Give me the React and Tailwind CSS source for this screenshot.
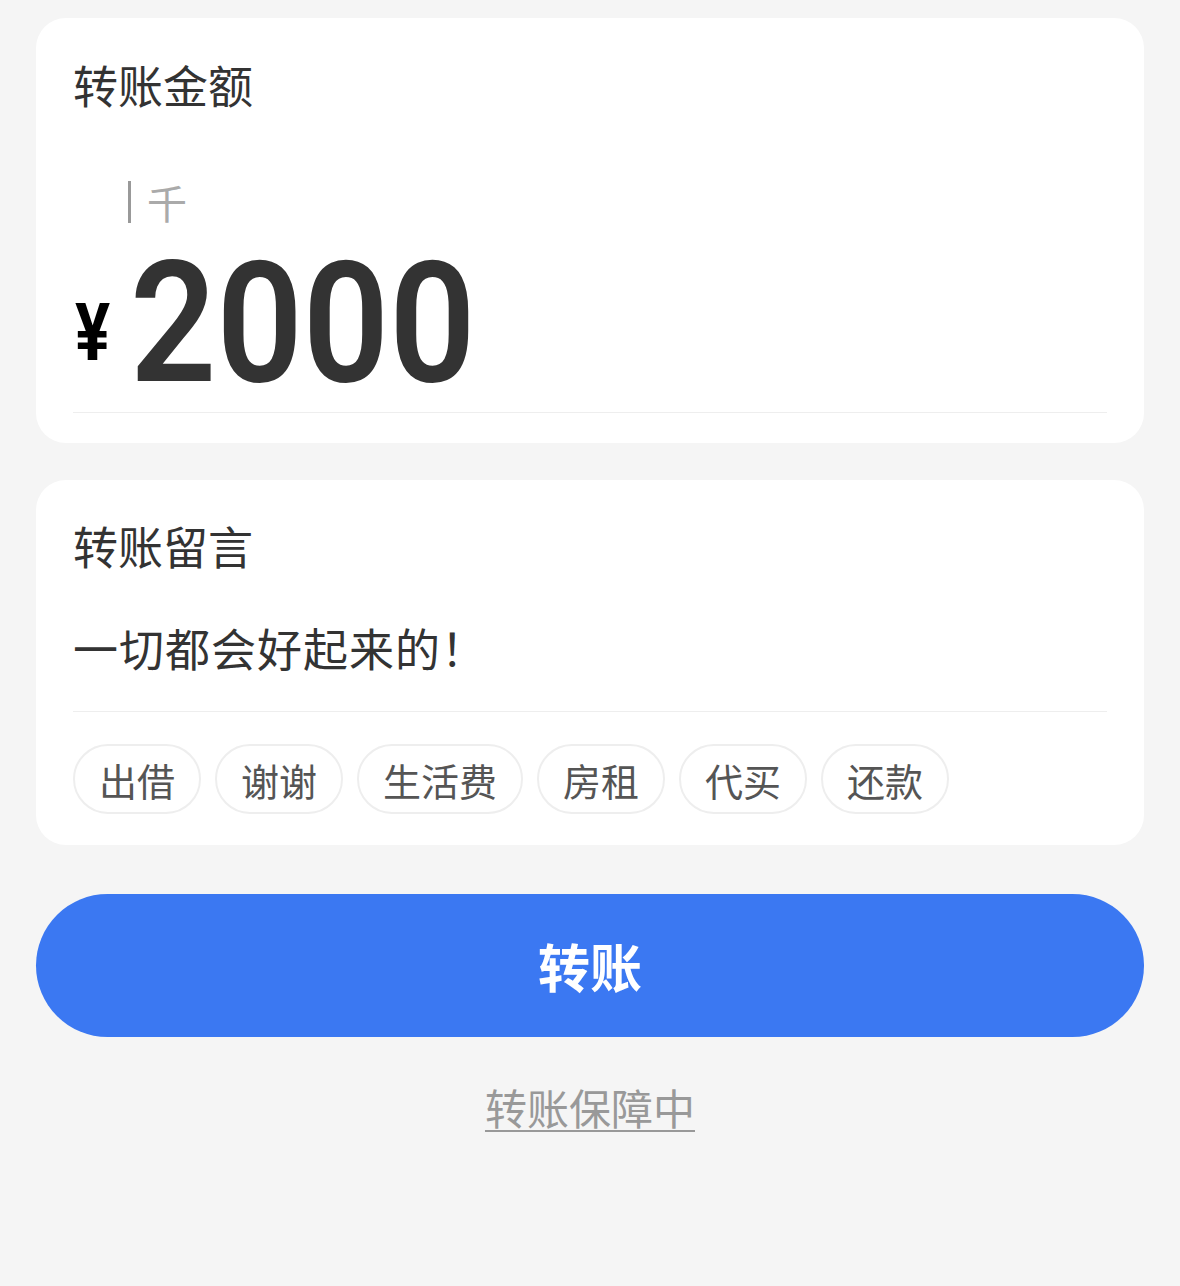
import React from 'react';

const tags = ['出借', '谢谢', '生活费', '房租', '代买', '还款'];

function AmountCard() {
    return (
        <div className="bg-white rounded-[30px] px-[37px] pt-[37px] pb-[30px]">
            <div className="text-[45px] leading-[60px] text-[#333]">转账金额</div>
            {/* unit hint */}
            <div className="flex items-center h-[50px] mt-[62px] pl-[55px]">
                <span className="w-[3px] h-[42px] bg-[#999] mr-[16px]"></span>
                <span className="text-[40px] leading-none text-[#aaa]">千</span>
            </div>
            <div className="flex items-start mt-[13px] pb-[4px] border-b border-[#eee]">
                <div className="w-[57px] pl-[2px] mt-[53px]">
                    <span className="text-[80px] leading-none font-bold text-black font-['Roboto'] inline-block scale-x-[0.82] origin-left">¥</span>
                </div>
                <span className="text-[168px] leading-none font-semibold text-[#333] font-['Roboto'] inline-block scale-x-[0.9] origin-left">2000</span>
            </div>
        </div>
    );
}

function MessageCard() {
    return (
        <div className="bg-white rounded-[30px] px-[37px] pt-[36px] pb-[31px]">
            <div className="text-[45px] leading-[60px] text-[#333]">转账留言</div>
            <div className="text-[45px] leading-[60px] tracking-[1px] text-[#333] mt-[42px] pb-[33px] border-b border-[#eee]">一切都会好起来的！</div>
            <div className="flex gap-[14px] mt-[32px]">
                {tags.map(t => (
                    <div key={t} className="h-[70px] px-[24px] flex items-center rounded-full border-2 border-[#eee] text-[38px] text-[#555]">{t}</div>
                ))}
            </div>
        </div>
    );
}

export default function App() {
    return (
        <div className="w-[1180px] h-[1286px] bg-[#f5f5f5] px-[36px] pt-[18px] font-['Noto_Sans_CJK_SC',sans-serif] overflow-hidden">
            <AmountCard />
            <div className="mt-[37px]">
                <MessageCard />
            </div>
            <button className="mt-[49px] w-full h-[143px] rounded-full bg-[#3b78f2] text-white text-[52px] font-bold">转账</button>
            <div className="mt-[38px] text-center">
                <span className="text-[42px] text-[#999] underline underline-offset-[5px] decoration-2">转账保障中</span>
            </div>
        </div>
    );
}
